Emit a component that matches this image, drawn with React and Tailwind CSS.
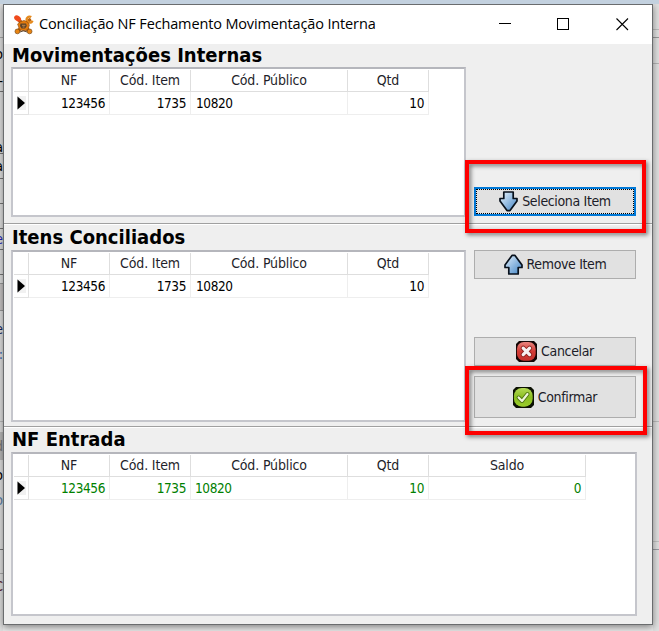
import React from 'react';
import clsx from 'clsx';

const baseColumns = [
    { label: 'NF', width: 'w-[81px]', align: 'text-right' },
    { label: 'Cód. Item', width: 'w-[81px]', align: 'text-right' },
    { label: 'Cód. Público', width: 'w-[157px]', align: 'text-left' },
    { label: 'Qtd', width: 'w-[81px]', align: 'text-right' },
];

const saldoColumn = { label: 'Saldo', width: 'w-[157px]', align: 'text-right' };

// Left edge of the form that stays visible behind the dialog
const leftEdge = [
    { style: 'h-[34px] border-b border-[#a9a9a9]' },
    { style: 'h-8', text: 'o' },
    { style: 'h-[22px] border-b border-[#777]', text: '-' },
    { style: 'h-[62px] border-b border-[#777] pt-12', text: 'a' },
    { style: 'h-[25px] border-b border-[#777]', text: 'a' },
    { style: 'h-[25px] border-b border-[#777]' },
    { style: 'h-[25px] border-b border-[#777]' },
    { style: 'h-[21px] border-b border-[#777] text-[#2525b5]', text: 'e' },
    { style: 'h-[25px] border-b border-[#777]' },
    { style: 'h-2' },
    { style: 'h-7 border-y border-[#999] bg-[#c8c5c5]' },
    { style: 'h-[35px] text-[#16265c]', text: 'e' },
    { style: 'h-4 text-[#3268b0]', text: ':' },
    { style: 'h-[60px] border-b border-[#bbb]' },
    { style: 'h-2.5' },
    { style: 'h-7 bg-[#bababa] text-[#777]', text: 'd' },
    { style: 'h-[30px]', text: 'o' },
    { style: 'h-5 text-[#5c7fa8]', text: 'o' },
    { style: 'h-10 border-b border-[#777]' },
    { style: 'h-6 border-b border-[#aaa]' },
    { style: 'h-[23px] text-[#5c1d2c]', text: 'C' },
];

const rightEdge = [
    { style: 'h-[26px] border-b border-[#bcbcbc]' },
    { style: 'h-2 border-b border-[#999]' },
    { style: 'h-[26px] border-b border-[#b5b5b5]' },
    { style: 'h-[358px] border-b border-[#bbb]' },
    { style: 'h-[120px] border-b border-[#c2c2c2]' },
    { style: 'h-2 border-b border-[#999ba2]' },
];

function FormEdge({ parts, className }) {
    return (
        <div className={clsx('flex shrink-0 flex-col overflow-hidden bg-[#dfdfdf] text-[14px] leading-3', className)}>
            {parts.map((part, i) => (
                <div key={i} className={clsx('flex shrink-0 items-center justify-end', part.style)}>
                    {part.text}
                </div>
            ))}
        </div>
    );
}

function AppIcon() {
    return (
        <svg width="20" height="20" viewBox="0 0 20 20" fill="none">
            <path d="M4 4 L15 16 M15.5 5 L4 16" stroke="#b8620f" strokeWidth="3.6" strokeLinecap="round" />
            <ellipse cx="3.6" cy="3.4" rx="3.7" ry="2.7" transform="rotate(35 3.6 3.4)" fill="#f04a1c" />
            <circle cx="15.6" cy="4.6" r="3" stroke="#e58a1e" strokeWidth="2.4" strokeDasharray="14.5 4.4" strokeDashoffset="-1" />
            <path d="M3.6 9 L6 7 L10 5.4 L13.5 7 L15.4 10 L14 14.6 L10 16 L5.5 14.6 Z" fill="#e27a0d" stroke="#8a450a" strokeWidth=".6" />
            <path d="M6.5 8.5 H12 L12.8 11 L11 13.6 H7.6 L6 11 Z" fill="#5a422a" />
            <path d="M8 10.3 h3.4 M8.6 12 h2" stroke="#d2904a" strokeWidth=".9" />
            <circle cx="3.4" cy="16.4" r="2.4" fill="#e88412" stroke="#7a4a18" strokeWidth=".7" />
            <circle cx="15.6" cy="16.4" r="2.4" fill="#e88412" stroke="#7a4a18" strokeWidth=".7" />
            <path d="M6 17 Q9.5 14.5 13 17" stroke="#5c4630" strokeWidth="1" />
        </svg>
    );
}

function ArrowIcon({ up }) {
    return (
        <svg width="19" height="21" viewBox="0 0 19 21" className={clsx(up && 'rotate-180')}>
            <defs>
                <linearGradient id={up ? 'arrowUp' : 'arrowDown'} x1="0" y1="0" x2="1" y2="1">
                    <stop offset="0" stopColor={up ? '#3f83c5' : '#eef7fe'} />
                    <stop offset="1" stopColor={up ? '#e3f1fd' : '#3f83c5'} />
                </linearGradient>
            </defs>
            <path
                d="M4.8 1 H14.2 V7.5 H18 V10 L11 19.6 H8 L1 10 V7.5 H4.8 Z"
                fill={up ? 'url(#arrowUp)' : 'url(#arrowDown)'}
                stroke="#08111c"
                strokeWidth="1.7"
                strokeLinejoin="round"
            />
        </svg>
    );
}

function CancelIcon() {
    return (
        <svg width="21" height="21" viewBox="0 0 21 21">
            <defs>
                <linearGradient id="cancelFill" x1="0" y1="0" x2="0" y2="1">
                    <stop offset="0" stopColor="#ea8680" />
                    <stop offset=".5" stopColor="#d33b35" />
                    <stop offset="1" stopColor="#c5332e" />
                </linearGradient>
            </defs>
            <path d="M3 0 H18 L21 3 V18 L18 21 H3 L0 18 V3 Z" fill="#130505" />
            <rect x=".9" y=".9" width="18.8" height="18.8" rx="7" fill="url(#cancelFill)" />
            <path d="M7.2 7.2 L13.6 13.6 M13.6 7.2 L7.2 13.6" stroke="#8c2420" strokeWidth="5" strokeLinecap="round" />
            <path d="M7.2 7.2 L13.6 13.6 M13.6 7.2 L7.2 13.6" stroke="#f7f1f1" strokeWidth="3.2" strokeLinecap="round" />
        </svg>
    );
}

function ConfirmIcon() {
    return (
        <svg width="21" height="21" viewBox="0 0 21 21">
            <defs>
                <linearGradient id="confirmFill" x1="0" y1="0" x2="0" y2="1">
                    <stop offset="0" stopColor="#b5db56" />
                    <stop offset=".5" stopColor="#89bd20" />
                    <stop offset="1" stopColor="#9acd2b" />
                </linearGradient>
            </defs>
            <path d="M3 0 H18 L21 3 V18 L18 21 H3 L0 18 V3 Z" fill="#0b1002" />
            <rect x=".9" y=".9" width="18.8" height="18.8" rx="8" fill="url(#confirmFill)" />
            <path d="M5.6 10.5 L9 14 L14.5 7" fill="none" stroke="#4c7310" strokeWidth="4" strokeLinecap="round" strokeLinejoin="round" />
            <path d="M5.6 10.5 L9 14 L14.5 7" fill="none" stroke="#eef6d8" strokeWidth="2.2" strokeLinecap="round" strokeLinejoin="round" />
        </svg>
    );
}

function TitleBar() {
    return (
        <div className="flex h-[39px] shrink-0 items-center bg-white pl-[10px]">
            <AppIcon />
            <span className="ml-[5px] pb-[2px] font-['Open_Sans',sans-serif] text-[14.5px] tracking-[-0.14px] whitespace-nowrap text-black">
                Conciliação NF Fechamento Movimentação Interna
            </span>
            <svg width="130" height="14" viewBox="0 0 130 14" fill="none" stroke="#000" className="mr-[23px] ml-auto">
                <path d="M0 5.5 H12" />
                <rect x="58.5" y="0.5" width="11" height="11" />
                <path d="M117.5 0.5 L129 12 M129 0.5 L117.5 12" strokeWidth="1.1" />
            </svg>
        </div>
    );
}

function Heading({ children }) {
    return (
        <h2 className="h-[23px] pl-px text-[20px] leading-[23px] font-bold tracking-[0.02px] whitespace-nowrap text-black">
            {children}
        </h2>
    );
}

function DataGrid({ columns, row, className, rowClass, codeClass }) {
    return (
        <div className={clsx('border-2 border-[#c5c6cc] border-t-[#b5b6bc] bg-white pt-px pl-px', className)}>
            <div className="flex h-[22px] tracking-[-0.15px] text-[#1f1f2b]">
                <div className="w-[15px] border-r border-b border-[#dedede]" />
                {columns.map((col) => (
                    <div
                        key={col.label}
                        className={clsx('border-r border-b border-[#dedede] text-center leading-[21px]', col.width)}
                    >
                        {col.label}
                    </div>
                ))}
            </div>
            <div className={clsx('flex h-[23px] text-[13.5px] tracking-[-0.4px]', rowClass)}>
                <div className="flex w-[15px] items-center border-r border-b border-[#e2e2e2] pl-[3px]">
                    <svg width="9" height="14" viewBox="0 0 9 14">
                        <rect width="9" height="14" fill="#f1f1f1" />
                        <path d="M0.5 0.5 L8 7 L0.5 13.5 Z" fill="#000" />
                    </svg>
                </div>
                {columns.map((col, i) => (
                    <div
                        key={col.label}
                        className={clsx(
                            'border-r border-b border-[#eeeeee] pr-1 leading-[22px]',
                            col.width,
                            col.align,
                            i === 2 && codeClass
                        )}
                    >
                        {row[i]}
                    </div>
                ))}
            </div>
        </div>
    );
}

function ActionButton({ icon, children, className }) {
    return (
        <button
            className={clsx(
                'flex w-[162px] items-center justify-center gap-1 bg-[#e1e1e1] tracking-[-0.35px] whitespace-nowrap text-[#1c1c28]',
                className
            )}
        >
            {icon}
            <span>{children}</span>
        </button>
    );
}

function Dialog() {
    const row = ['123456', '1735', '10820', '10'];

    return (
        <main className="z-10 flex h-[621px] w-[650px] shrink-0 flex-col border border-[#6a6c6e] bg-[#efefef] shadow-[0_2px_7px_rgba(0,0,0,0.45)]">
            <TitleBar />

            <section className="flex h-[180px] gap-2 border-b border-[#a0a0a0] pl-[7px]">
                <div>
                    <Heading>Movimentações Internas</Heading>
                    <DataGrid columns={baseColumns} row={row} className="h-[150px] w-[455px]" codeClass="pl-[5px]" />
                </div>
                <div className="flex flex-col justify-end pb-[7px]">
                    <ActionButton
                        icon={<ArrowIcon />}
                        className="h-[29px] border-2 border-[#0078d7] outline-1 -outline-offset-3 outline-dotted outline-black"
                    >
                        Seleciona Item
                    </ActionButton>
                </div>
            </section>

            <section className="flex h-[203px] gap-2 border-t border-b border-t-white border-b-[#a0a0a0] pl-[7px]">
                <div className="flex flex-col gap-px pt-px">
                    <Heading>Itens Conciliados</Heading>
                    <DataGrid columns={baseColumns} row={row} className="h-[172px] w-[455px]" codeClass="pl-[5px]" />
                </div>
                <div className="flex flex-col justify-between pt-[25px] pb-2">
                    <ActionButton icon={<ArrowIcon up />} className="h-[29px] border border-[#adadad]">
                        Remove Item
                    </ActionButton>
                    <div className="flex flex-col gap-[10px]">
                        <ActionButton icon={<CancelIcon />} className="h-[29px] border border-[#adadad]">
                            Cancelar
                        </ActionButton>
                        <ActionButton icon={<ConfirmIcon />} className="h-[42px] border border-[#adadad]">
                            Confirmar
                        </ActionButton>
                    </div>
                </div>
            </section>

            <section className="flex flex-col gap-px border-t border-white pl-[7px]">
                <Heading>NF Entrada</Heading>
                <DataGrid
                    columns={[...baseColumns, saldoColumn]}
                    row={[...row, '0']}
                    className="h-[164px] w-[626px]"
                    rowClass="text-[#008000]"
                    codeClass="pl-1"
                />
            </section>
        </main>
    );
}

function App() {
    return (
        <div className="relative h-[631px] w-[659px] overflow-hidden border-t-4 border-[#c3d1df] bg-[#e9e9e9] font-['DejaVu_Sans_Condensed','DejaVu_Sans',sans-serif] text-[14px]">
            <div className="flex h-[627px]">
                <FormEdge parts={leftEdge} className="w-[3px]" />
                <Dialog />
                <FormEdge parts={rightEdge} className="w-[6px]" />
            </div>

            {/* highlights around the two buttons to press */}
            <div className="pointer-events-none absolute top-[156px] left-[465px] z-20 h-[73px] w-[181px] border-4 border-[#fe0000] drop-shadow-[2px_2px_2px_rgba(0,0,0,0.5)]" />
            <div className="pointer-events-none absolute top-[362px] left-[465px] z-20 h-[69px] w-[182px] border-4 border-[#fe0000] drop-shadow-[2px_2px_2px_rgba(0,0,0,0.5)]" />
        </div>
    );
}

export default App;
